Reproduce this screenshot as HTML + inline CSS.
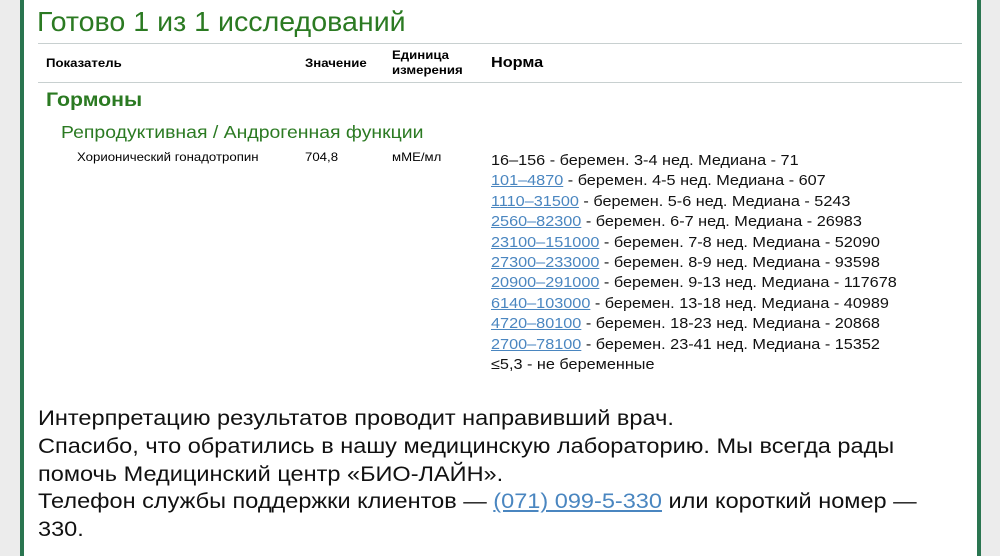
<html><head><style>
body{margin:0;width:1000px;height:556px;background:#fff;font-family:"Liberation Sans",sans-serif;position:relative;overflow:hidden}
.a{position:absolute;white-space:nowrap;transform-origin:0 0}
.g{color:#2b7a22}
a{color:#4a86c0;text-decoration:underline}
.n{font-size:14.5px;color:#111;line-height:20.4px;transform:scaleX(1.12)}
.s{font-size:12px;transform:scaleX(1.1)}
.h{font-size:12px;font-weight:bold;transform:scaleX(1.1)}
</style></head><body>
<div class="a" style="left:0;top:0;width:20px;height:556px;background:#ececec"></div>
<div class="a" style="left:20px;top:0;width:4px;height:556px;background:#2a7550"></div>
<div class="a" style="left:977px;top:0;width:4px;height:556px;background:#2a7550"></div>
<div class="a" style="left:981px;top:0;width:19px;height:556px;background:#ececec"></div>
<div class="a g" style="left:37px;top:6px;font-size:27.5px;transform:scaleX(1.04)">Готово 1 из 1 исследований</div>
<div class="a" style="left:38px;top:43px;width:924px;height:1px;background:#c8d0d0"></div>
<div class="a" style="left:38px;top:82px;width:924px;height:1px;background:#c8d0d0"></div>
<div class="a h" style="left:46px;top:56px">Показатель</div>
<div class="a h" style="left:305px;top:56px">Значение</div>
<div class="a h" style="left:392px;top:48px;line-height:15px">Единица<br>измерения</div>
<div class="a" style="left:491px;top:55px;font-size:14.5px;font-weight:bold;transform:scaleX(1.12)">Норма</div>
<div class="a g" style="left:46px;top:90px;font-size:19px;font-weight:bold;transform:scaleX(1.12)">Гормоны</div>
<div class="a g" style="left:61px;top:122px;font-size:17.5px;transform:scaleX(1.11)">Репродуктивная / Андрогенная функции</div>
<div class="a s" style="left:77px;top:150px">Хорионический гонадотропин</div>
<div class="a s" style="left:305px;top:150px">704,8</div>
<div class="a s" style="left:392px;top:150px">мМЕ/мл</div>
<div class="a n" style="left:491px;top:151px">16–156 - беремен. 3-4 нед. Медиана - 71<br>
<a>101–4870</a> - беремен. 4-5 нед. Медиана - 607<br>
<a>1110–31500</a> - беремен. 5-6 нед. Медиана - 5243<br>
<a>2560–82300</a> - беремен. 6-7 нед. Медиана - 26983<br>
<a>23100–151000</a> - беремен. 7-8 нед. Медиана - 52090<br>
<a>27300–233000</a> - беремен. 8-9 нед. Медиана - 93598<br>
<a>20900–291000</a> - беремен. 9-13 нед. Медиана - 117678<br>
<a>6140–103000</a> - беремен. 13-18 нед. Медиана - 40989<br>
<a>4720–80100</a> - беремен. 18-23 нед. Медиана - 20868<br>
<a>2700–78100</a> - беремен. 23-41 нед. Медиана - 15352<br>
≤5,3 - не беременные</div>
<div class="a" style="left:38px;top:405px;font-size:21px;line-height:27.8px;color:#111;transform:scaleX(1.12)">Интерпретацию результатов проводит направивший врач.<br>
Спасибо, что обратились в нашу медицинскую лабораторию. Мы всегда рады<br>
помочь Медицинский центр «БИО-ЛАЙН».<br>
Телефон службы поддержки клиентов — <a>(071) 099-5-330</a> или короткий номер —<br>
330.</div>
</body></html>
